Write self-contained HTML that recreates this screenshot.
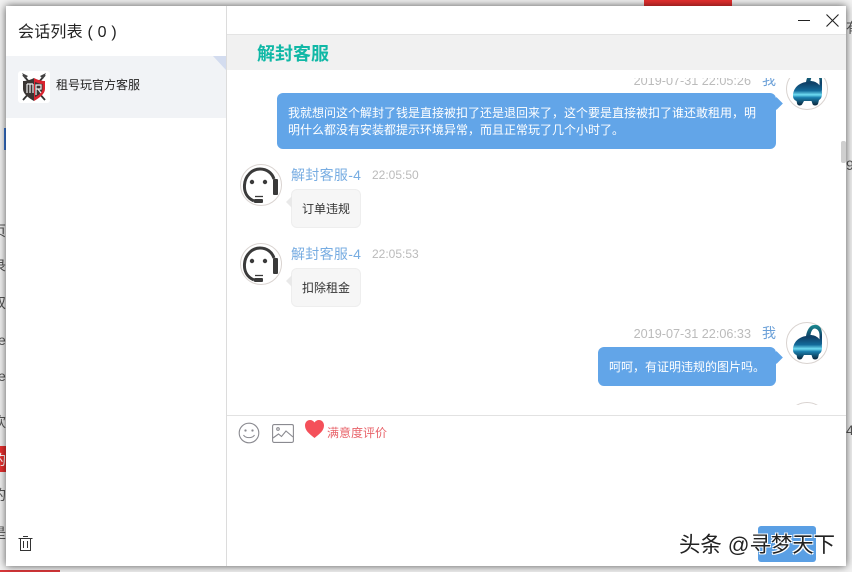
<!DOCTYPE html>
<html lang="zh">
<head>
<meta charset="utf-8">
<style>
html,body{margin:0;padding:0}
body{width:852px;height:572px;position:relative;overflow:hidden;background:#f2f2f2;font-family:"Liberation Sans","Noto Sans CJK SC",sans-serif;color:#333}
.a{position:absolute;white-space:nowrap}
.win{position:absolute;left:6px;top:6px;width:840px;height:560px;background:#fff;box-shadow:0 0 8px rgba(0,0,0,.65);overflow:hidden}
.bg{font-size:14px;color:#555;line-height:16px}
.msgs{position:absolute;left:227px;top:78px;width:614px;height:327px;overflow:hidden}
.bub{position:absolute;border-radius:6px;font-size:12px;line-height:17px;box-sizing:border-box;white-space:nowrap}
.blue{background:#62a5e8;color:#fff}
.blue:after{content:"";position:absolute;right:-5px;top:6px;width:9px;height:9px;background:#62a5e8;transform:rotate(45deg)}
.grey{background:#f6f6f6;border:1px solid #eee;color:#333;left:64px;width:70px;height:39px;line-height:38px;text-align:center}
.grey:after{content:"";position:absolute;left:-6px;top:6px;border:6px solid transparent;border-left:0;border-right-color:#e9e9e9}
.av{position:absolute;width:42px;height:42px;box-sizing:border-box;border-radius:50%;border:1px solid #d9d3d0;background:#fff}
.nm{position:absolute;left:64px;font-size:14px;line-height:18px;color:#78ade2;white-space:nowrap;letter-spacing:.3px}
.tm{position:absolute;left:145px;font-size:12px;line-height:18px;color:#bbb;white-space:nowrap}
.ts{position:absolute;font-size:12.65px;line-height:18px;color:#bbb;right:65px;white-space:nowrap}
.me{color:#6ba0d8;font-size:14px;margin-left:11px}
</style>
</head>
<body>
<div class="a" style="left:644px;top:0;width:88px;height:6px;background:#e8302f"></div>
<div class="a" style="left:0;top:446px;width:6px;height:26px;background:#e8302f"></div>
<div class="a" style="left:4px;top:128px;width:2px;height:22px;background:#3b78d8"></div>
<div class="a" style="left:0;top:570px;width:60px;height:2px;background:#d9383a"></div>
<div class="a bg" style="left:-8px;top:223px">页</div>
<div class="a bg" style="left:-8px;top:258px">录</div>
<div class="a bg" style="left:-8px;top:295px">双</div>
<div class="a bg" style="left:-2px;top:332px">e</div>
<div class="a bg" style="left:-2px;top:368px">e</div>
<div class="a bg" style="left:-8px;top:414px">欢</div>
<div class="a bg" style="left:-8px;top:452px;color:#fff">的</div>
<div class="a bg" style="left:-8px;top:487px">的</div>
<div class="a bg" style="left:-8px;top:525px">是</div>
<div class="a bg" style="left:846px;top:20px">有</div>
<div class="a bg" style="left:846px;top:157px">9</div>
<div class="a bg" style="left:846px;top:422px">4</div>

<div class="win"></div>

<!-- sidebar -->
<div class="a" style="left:226px;top:6px;width:1px;height:560px;background:#dcdcdc"></div>
<div class="a" style="left:18px;top:23px;font-size:16px;line-height:20px;color:#222;letter-spacing:.2px">会话列表 ( 0 )</div>
<div class="a" style="left:6px;top:56px;width:220px;height:62px;background:#f1f3f6"></div>
<svg class="a" style="left:213px;top:56px" width="13" height="14"><path d="M0 0H13V14Z" fill="#d3dcef"/></svg>
<div class="a" style="left:18px;top:71px;width:32px;height:32px;background:#fff;border-radius:3px"></div>
<svg class="a" style="left:21px;top:72px" width="26" height="30" viewBox="0 0 26 30">
<path d="M2 3 24 28M24 3 2 28" stroke="#333" stroke-width="1.800"/>
<path d="M1 1 7 4 4 7ZM25 1 19 4 22 7Z" fill="#444"/>
<path d="M13 6C9 8 5 9 2 9V17C2 22 8 26 13 29Z" fill="#3a3533"/>
<path d="M13 6C17 8 21 9 24 9V17C24 22 18 26 13 29Z" fill="#d8232f"/>
<path d="M14 10C17 11 19 12 21.500 12V17C21.500 20 17 24 14 25Z" fill="#3a3533"/>
<path d="M6 12H12M6 12V21M12 12V21M9 12V21M15 13H20V17H15ZM15 17V23M17 17 20 21" stroke="#eee" stroke-width="1.200" fill="none"/>
</svg>
<div class="a" style="left:56px;top:77px;font-size:12px;line-height:17px;color:#222">租号玩官方客服</div>
<svg class="a" style="left:18px;top:535px" width="15" height="17" viewBox="0 0 15 17" fill="none" stroke="#333" stroke-width="1">
<path d="M.5 3.5H14.5M5 1.5H10M2.5 3.5V15.5H12.500V3.500M5.500 6V13M9.500 6V13"/>
</svg>

<!-- header -->
<div class="a" style="left:227px;top:34px;width:619px;height:36px;background:#f1f1f1;border-top:1px solid #e4e4e4;box-sizing:border-box"></div>
<div class="a" style="left:257px;top:43px;font-size:18px;line-height:23px;font-weight:bold;color:#10b8a6">解封客服</div>
<div class="a" style="left:798px;top:20px;width:12px;height:1px;background:#222"></div>
<svg class="a" style="left:826px;top:14px" width="13" height="13"><path d="M.5.500 12.500 12.500M12.500.500.500 12.500" stroke="#222" stroke-width="1.100" fill="none"/></svg>

<!-- messages -->
<div class="msgs">
  <div class="ts" style="top:-7px">2019-07-31 22:05:26<span class="me">我</span></div>
  <div class="av" style="left:559px;top:-10px"><svg width="40" height="40" viewBox="0 0 40 40"><use href="#el"/></svg></div>
  <div class="bub blue" style="left:50px;top:15px;width:499px;height:56px;padding:12px 0 0 11px">我就想问这个解封了钱是直接被扣了还是退回来了，这个要是直接被扣了谁还敢租用，明<br>明什么都没有安装都提示环境异常，而且正常玩了几个小时了。</div>

  <div class="av" style="left:13px;top:86px"><svg width="40" height="40" viewBox="0 0 40 40"><use href="#cs"/></svg></div>
  <div class="nm" style="top:88px">解封客服-4</div>
  <div class="tm" style="top:88px">22:05:50</div>
  <div class="bub grey" style="top:111px">订单违规</div>

  <div class="av" style="left:13px;top:165px"><svg width="40" height="40" viewBox="0 0 40 40"><use href="#cs"/></svg></div>
  <div class="nm" style="top:167px">解封客服-4</div>
  <div class="tm" style="top:167px">22:05:53</div>
  <div class="bub grey" style="top:190px">扣除租金</div>

  <div class="ts" style="top:246px">2019-07-31 22:06:33<span class="me">我</span></div>
  <div class="av" style="left:559px;top:244px"><svg width="40" height="40" viewBox="0 0 40 40"><use href="#el"/></svg></div>
  <div class="bub blue" style="left:371px;top:269px;width:178px;height:39px;padding:12px 0 0 11px">呵呵，有证明违规的图片吗。</div>
  <div class="av" style="left:559px;top:324px"></div>
</div>
<div class="a" style="left:841px;top:141px;width:5px;height:22px;background:#cfcfcf;border-radius:2px"></div>

<!-- toolbar -->
<div class="a" style="left:227px;top:415px;width:619px;height:1px;background:#e2e2e2"></div>
<svg class="a" style="left:238px;top:422px" width="22" height="22" viewBox="0 0 22 22" fill="none" stroke="#8a8a90" stroke-width="1.100">
<circle cx="11" cy="11" r="9.800"/><circle cx="7.500" cy="8.500" r=".6"/><circle cx="14.500" cy="8.500" r=".6"/><path d="M5.500 13C7.500 16.500 14.500 16.500 16.500 13"/>
</svg>
<svg class="a" style="left:272px;top:424px" width="22" height="19" viewBox="0 0 22 19" fill="none" stroke="#8a8a90" stroke-width="1.100">
<rect x=".6" y=".6" width="20.800" height="17.800" rx="1.500"/><circle cx="6" cy="5" r="1.300"/><path d="M1 14 6.500 10 9.500 12.500 14 7 21 13"/>
</svg>
<svg class="a" style="left:305px;top:420px" width="19" height="18" viewBox="0 0 19 18"><path d="M9.500 18C4 13.500 0 10.500 0 5.500 0 2.300 2.300 0 5 0 7 0 8.600 1 9.500 2.500 10.400 1 12 0 14 0 16.700 0 19 2.300 19 5.500 19 10.500 15 13.500 9.500 18Z" fill="#f4505a"/></svg>
<div class="a" style="left:327px;top:425px;font-size:12px;line-height:17px;color:#e8636a">满意度评价</div>

<!-- send + watermark -->
<div class="a" style="left:758px;top:526px;width:58px;height:36px;background:#5a9fe4;border-radius:3px"></div>
<div class="a" style="left:679px;top:531px;font-size:21.400px;line-height:28px;color:#222;text-shadow:1px 1px 0 #fff,-1px 1px 0 #fff,1px -1px 0 #fff,-1px -1px 0 #fff">头条 @寻梦天下</div>

<svg width="0" height="0" style="position:absolute">
<defs>
<linearGradient id="g" gradientUnits="userSpaceOnUse" x1="0" y1="2" x2="0" y2="36">
<stop offset="0" stop-color="#1a8a90"/><stop offset=".35" stop-color="#0f3f66"/><stop offset=".58" stop-color="#136a9a"/><stop offset=".7" stop-color="#6fdcf2"/><stop offset=".78" stop-color="#1a7fae"/><stop offset="1" stop-color="#0b2a40"/>
</linearGradient>
<g id="el">
<path d="M6 27C6 19 12 14 19 13 20 7 23 2 27 2 32 1 35 5 35 11L35 21C35 23 32.500 23 32.500 21L32.500 12C32.500 8 30 5.500 27.500 5.500 25 6 24 9 23.500 12 29 12 35 16 35 24 35 28 34 30 32 31L31 35C30 37 26 37 25.500 35L24.500 32H17L15 35.500C14 37 10 37 10 34L9.500 32C7 31 6 29 6 27Z" fill="url(#g)"/>
</g>
<g id="cs" fill="none" stroke="#3a3a3a">
<path d="M13 36C6 33 3 27 3.500 20 4 11 11 4 19 4 26 4 31 8 33 14" stroke-width="3"/>
<rect x="32" y="14" width="5" height="16" rx="1" fill="#3a3a3a" stroke="none"/>
<rect x="13" y="34" width="9" height="4" rx="1" fill="#3a3a3a" stroke="none"/>
<circle cx="11" cy="17" r="2.200" fill="#3a3a3a" stroke="none"/>
<circle cx="24" cy="17" r="2.200" fill="#3a3a3a" stroke="none"/>
<path d="M14 31.500H22" stroke-width="1.300"/>
</g>
</defs>
</svg>
</body>
</html>
